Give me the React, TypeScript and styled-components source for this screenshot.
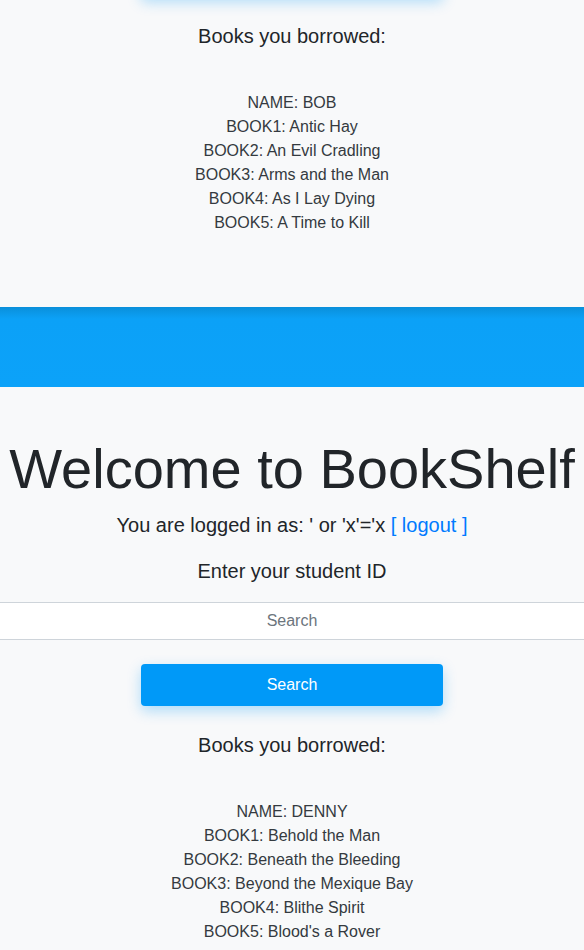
import React from "react";
import styled, { createGlobalStyle } from "styled-components";

const Global = createGlobalStyle`
  html, body { margin: 0; padding: 0; background: #f8f9fa; }
  body {
    font-family: "Liberation Sans", Arial, sans-serif;
    color: #212529;
    overflow: hidden;
  }
  * { box-sizing: border-box; }
`;

const Page = styled.div`
  margin-top: -402px;
  display: flex;
  flex-direction: column;
`;

const Section = styled.section`
  display: flex;
  flex-direction: column;
  align-items: center;
  text-align: center;
  padding-bottom: 72px;
`;

const NavBar = styled.div`
  align-self: stretch;
  height: 80px;
  background: linear-gradient(#0a8fda 0px, #0ca1f7 12px, #0ca2f9 100%);
`;

const Title = styled.h1`
  margin: 48px 0 8px;
  font-size: 56px;
  font-weight: 300;
  line-height: 67px;
  color: #212529;
  white-space: nowrap;
`;

const Lead = styled.p`
  margin: 0 0 16px;
  font-size: 20px;
  line-height: 30px;
`;

const Link = styled.a`
  color: #007bff;
  text-decoration: none;
`;

const SearchInput = styled.input`
  align-self: stretch;
  height: 38px;
  border: none;
  border-top: 1px solid #ced4da;
  border-bottom: 1px solid #ced4da;
  background: #fff;
  font-family: inherit;
  font-size: 16px;
  text-align: center;
  color: #495057;
  outline: none;
  &::placeholder { color: #6c757d; }
`;

const SearchButton = styled.button`
  margin-top: 24px;
  width: 302px;
  height: 42px;
  border: none;
  border-radius: 4px;
  background: #0099f8;
  color: #fff;
  font-family: inherit;
  font-size: 16px;
  box-shadow: 0 5px 14px rgba(0, 153, 248, 0.3);
`;

const SubHeading = styled.h5`
  margin: 27px 0 43px;
  font-size: 20px;
  font-weight: 500;
  line-height: 24px;
`;

const List = styled.div`
  display: flex;
  flex-direction: column;
  font-size: 16px;
  line-height: 24px;
  color: #343a40;
`;

type Record = { name: string; books: string[] };

const records: Record[] = [
  {
    name: "BOB",
    books: ["Antic Hay", "An Evil Cradling", "Arms and the Man", "As I Lay Dying", "A Time to Kill"],
  },
  {
    name: "DENNY",
    books: [
      "Behold the Man",
      "Beneath the Bleeding",
      "Beyond the Mexique Bay",
      "Blithe Spirit",
      "Blood's a Rover",
    ],
  },
];

const Shelf = ({ rec }: { rec: Record }) => (
  <Section>
    <NavBar />
    <Title>Welcome to BookShelf</Title>
    <Lead>
      You are logged in as: ' or 'x'='x <Link href="#">[ logout ]</Link>
    </Lead>
    <Lead>Enter your student ID</Lead>
    <SearchInput placeholder="Search" />
    <SearchButton>Search</SearchButton>
    <SubHeading>Books you borrowed:</SubHeading>
    <List>
      <span>NAME: {rec.name}</span>
      {rec.books.map((b, i) => (
        <span key={i}>
          BOOK{i + 1}: {b}
        </span>
      ))}
    </List>
  </Section>
);

export default function App() {
  return (
    <>
      <Global />
      <Page>
        {records.map((r) => (
          <Shelf key={r.name} rec={r} />
        ))}
      </Page>
    </>
  );
}
